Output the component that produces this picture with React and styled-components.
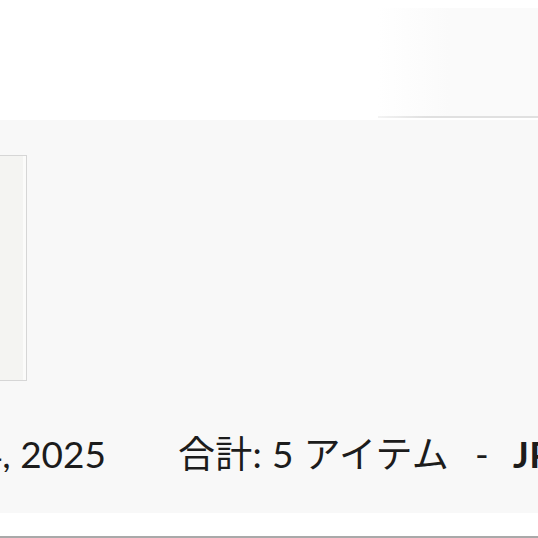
import React from 'react'
import styled, { createGlobalStyle } from 'styled-components'

const GlobalStyle = createGlobalStyle`
  html, body {
    margin: 0;
    padding: 0;
    background: #ffffff;
    overflow: hidden;
  }
  body {
    font-family: Lato, "Noto Sans CJK JP", sans-serif;
    color: #1c1c1c;
  }
`

const Page = styled.div`
  width: 538px;
  height: 538px;
  display: flex;
  flex-direction: column;
  overflow: hidden;
`

const Header = styled.div`
  height: 118px;
  display: flex;
  justify-content: flex-end;
  align-items: flex-end;
`

const HeaderTab = styled.div`
  width: 160px;
  height: 108px;
  background: linear-gradient(90deg, #ffffff 0%, #fafafa 45%);
  border-bottom: 2px solid;
  border-image: linear-gradient(90deg, #f4f4f4, #e0e0e0 30%) 1;
`

const Panel = styled.div`
  height: 393px;
  margin-top: 2px;
  background: #f8f8f8;
  display: flex;
  flex-direction: column;
  padding-top: 35px;
  box-sizing: border-box;
`

const Thumb = styled.div`
  width: 28px;
  height: 226px;
  margin-left: -1px;
  box-sizing: border-box;
  border: 1px solid #d6d6d6;
  background: #f4f4f2;
  box-shadow: inset -3px 0 0 #fbfbfa;
`

const SummaryRow = styled.div`
  display: flex;
  align-items: baseline;
  margin-top: 54px;
  white-space: nowrap;
  font-size: 37px;
  line-height: 1;
`

const DateCell = styled.div`
  width: 106px;
  flex-shrink: 0;
  display: flex;
  justify-content: flex-end;
  overflow: hidden;
`

const Total = styled.span`
  margin-left: 72px;
  letter-spacing: 0.3px;
`

const Dash = styled.span`
  margin: 0 24px 0 26px;
`

const Amount = styled.span`
  font-weight: 700;
`

const Footer = styled.div`
  flex: 1;
  background: #ffffff;
  border-bottom: 2px solid #a9a9a9;
`

export default function App() {
  return (
    <Page>
      <GlobalStyle />
      <Header>
        <HeaderTab />
      </Header>
      <Panel>
        <Thumb />
        <SummaryRow>
          <DateCell>
            <span>Mar 4, 2025</span>
          </DateCell>
          <Total>
            合計: 5 アイテム
            <Dash>-</Dash>
            <Amount>JPY 12,800</Amount>
          </Total>
        </SummaryRow>
      </Panel>
      <Footer />
    </Page>
  )
}
